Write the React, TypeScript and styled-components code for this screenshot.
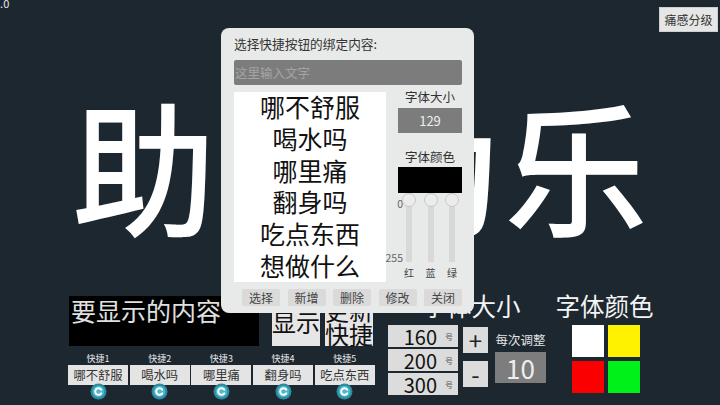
import React from 'react';
import styled, { createGlobalStyle } from 'styled-components';

const shortcuts = ['哪不舒服', '喝水吗', '哪里痛', '翻身吗', '吃点东西'];
const phrases = ['哪不舒服', '喝水吗', '哪里痛', '翻身吗', '吃点东西', '想做什么'];
const dialogActions = ['选择', '新增', '删除', '修改', '关闭'];
const sizes = ['160', '200', '300'];
const sliders = ['红', '蓝', '绿'];
const swatches = ['#ffffff', '#fff200', '#fb0000', '#00f01a'];

const RefreshIcon = () => (
    <StIcon width="17" height="17" viewBox="0 0 17 17">
        <circle cx="8.5" cy="8.5" r="8" fill="#2b8ea3" />
        <circle cx="8.5" cy="8.5" r="5.8" fill="#4fb7cc" />
        <path d="M11.2 6.6A3.3 3.3 0 1 0 11.2 10.4" fill="none" stroke="#ffffff" strokeWidth="2" strokeLinecap="round" />
    </StIcon>
);

const App = () => {
    return (
        <StPage>
            <GlobalStyle />
            <StTopBar>
                <StVersion>1.0</StVersion>
                <StGradeBtn>痛感分级</StGradeBtn>
            </StTopBar>
            <StHero>助人为乐</StHero>
            <StBottom>
                <StContentCol>
                    <StInputRow>
                        <StContentInput>要显示的内容</StContentInput>
                        <StShowBtn>显示</StShowBtn>
                        <StUpdateBtn>更新<br />快捷</StUpdateBtn>
                    </StInputRow>
                    <StShortcuts>
                        {shortcuts.map((text, i) => (
                            <StShortcut key={text}>
                                <StShortcutLabel>快捷{i + 1}</StShortcutLabel>
                                <StShortcutBtn>{text}</StShortcutBtn>
                                <RefreshIcon />
                            </StShortcut>
                        ))}
                    </StShortcuts>
                </StContentCol>
                <StSizeCol>
                    <StSectionTitle>字体大小</StSectionTitle>
                    <StSizeBody>
                        <StSizeList>
                            {sizes.map((size) => (
                                <StSizeBtn key={size}>
                                    {size}
                                    <StUnit>号</StUnit>
                                </StSizeBtn>
                            ))}
                        </StSizeList>
                        <StStepList>
                            <StStepBtn>+</StStepBtn>
                            <StStepBtn>-</StStepBtn>
                        </StStepList>
                        <StStepCol>
                            <StStepLabel>每次调整</StStepLabel>
                            <StStepValue>10</StStepValue>
                        </StStepCol>
                    </StSizeBody>
                </StSizeCol>
                <StColorCol>
                    <StSectionTitle>字体颜色</StSectionTitle>
                    <StSwatches>
                        {swatches.map((color) => (
                            <StSwatch key={color} $color={color} />
                        ))}
                    </StSwatches>
                </StColorCol>
            </StBottom>
            <StDialog>
                <StDialogTitle>选择快捷按钮的绑定内容:</StDialogTitle>
                <StDialogInput>这里输入文字</StDialogInput>
                <StDialogBody>
                    <StPhraseList>
                        {phrases.map((text) => (
                            <StPhrase key={text}>{text}</StPhrase>
                        ))}
                    </StPhraseList>
                    <StDialogSide>
                        <StSideLabel>字体大小</StSideLabel>
                        <StSizeValue>129</StSizeValue>
                        <StColorLabel>字体颜色</StColorLabel>
                        <StColorPreview />
                        <StSliderArea>
                            <StScale>
                                <span>0</span>
                                <span>255</span>
                            </StScale>
                            {sliders.map((name) => (
                                <StSlider key={name}>
                                    <StTrack>
                                        <StThumb />
                                    </StTrack>
                                    <StSliderName>{name}</StSliderName>
                                </StSlider>
                            ))}
                        </StSliderArea>
                    </StDialogSide>
                </StDialogBody>
                <StDialogActions>
                    {dialogActions.map((text) => (
                        <StActionBtn key={text}>{text}</StActionBtn>
                    ))}
                </StDialogActions>
            </StDialog>
        </StPage>
    );
};

export default App;

const GlobalStyle = createGlobalStyle`
    html, body {
        margin: 0;
        padding: 0;
        background: #1c2730;
    }
    * {
        box-sizing: border-box;
    }
`;
const StPage = styled.div`
    position: relative;
    display: flex;
    flex-direction: column;
    width: 720px;
    height: 405px;
    overflow: hidden;
    background: #1c2730;
    font-family: 'Noto Sans CJK SC', 'Noto Sans', sans-serif;
    color: #fff;
`;
const StTopBar = styled.div`
    display: flex;
    justify-content: space-between;
    align-items: flex-start;
    height: 32px;
    padding: 7px 2px 0 0;
`;
const StVersion = styled.span`
    margin: -11px 0 0 -6px;
    font-size: 11px;
    line-height: 14px;
    color: #e6e6e6;
`;
const StGradeBtn = styled.div`
    width: 59px;
    height: 25px;
    border: 1px solid #cfcfcf;
    background: #e6e6e6;
    color: #333;
    font-size: 12px;
    line-height: 23px;
    text-align: center;
    white-space: nowrap;
`;
const StHero = styled.div`
    height: 264px;
    font-size: 144px;
    font-weight: 500;
    line-height: 262px;
    text-align: center;
    white-space: nowrap;
    color: #fff;
`;
const StBottom = styled.div`
    display: flex;
    padding-left: 68px;
    height: 109px;
`;
const StContentCol = styled.div`
    width: 320px;
`;
const StInputRow = styled.div`
    display: flex;
    height: 50px;
    padding-left: 1px;
`;
const StContentInput = styled.div`
    width: 190px;
    height: 50px;
    padding-left: 2px;
    background: #000;
    color: #e0e0e0;
    font-size: 25px;
    line-height: 28px;
    white-space: nowrap;
`;
const StShowBtn = styled.div`
    width: 48px;
    height: 50px;
    margin-left: 13px;
    padding-top: 11px;
    background: #e6e6e6;
    color: #111;
    font-size: 24px;
    line-height: 30px;
    text-align: center;
`;
const StUpdateBtn = styled.div`
    width: 48px;
    height: 50px;
    margin-left: 5px;
    padding-top: 2px;
    background: #e6e6e6;
    color: #111;
    font-size: 24px;
    line-height: 24px;
    text-align: center;
    white-space: nowrap;
`;
const StShortcuts = styled.div`
    display: flex;
    gap: 1.7px;
    margin-top: 6px;
`;
const StShortcut = styled.div`
    display: flex;
    flex-direction: column;
    align-items: center;
    width: 60px;
`;
const StShortcutLabel = styled.div`
    height: 13px;
    font-size: 9px;
    line-height: 13px;
    color: #e8e8e8;
`;
const StShortcutBtn = styled.div`
    width: 100%;
    height: 20px;
    background: #e4e4e4;
    color: #333;
    font-size: 12.3px;
    line-height: 20px;
    text-align: center;
    white-space: nowrap;
`;
const StIcon = styled.svg`
    margin-top: -2px;
`;
const StSizeCol = styled.div`
    width: 167px;
`;
const StSectionTitle = styled.div`
    height: 31px;
    margin-top: -2px;
    color: #f4f4f4;
    font-size: 24.5px;
    line-height: 24px;
    text-align: center;
    white-space: nowrap;
`;
const StSizeBody = styled.div`
    display: flex;
    align-items: flex-start;
`;
const StSizeList = styled.div`
    display: flex;
    flex-direction: column;
    gap: 2px;
    width: 70px;
`;
const StSizeBtn = styled.div`
    display: flex;
    justify-content: flex-end;
    align-items: center;
    height: 22px;
    padding-right: 5px;
    background: #dcdcdc;
    color: #111;
    font-size: 20px;
`;
const StUnit = styled.span`
    margin-left: 8px;
    font-size: 8px;
    color: #555;
`;
const StStepList = styled.div`
    display: flex;
    flex-direction: column;
    gap: 8px;
    margin: 2px 0 0 5px;
`;
const StStepBtn = styled.div`
    width: 25px;
    height: 26px;
    background: #dcdcdc;
    color: #222;
    font-size: 24px;
    line-height: 26px;
    text-align: center;
`;
const StStepCol = styled.div`
    display: flex;
    flex-direction: column;
    align-items: center;
    margin-left: 7px;
`;
const StStepLabel = styled.div`
    height: 27px;
    padding-top: 8px;
    color: #e4e4e4;
    font-size: 12.5px;
    line-height: 14px;
    white-space: nowrap;
`;
const StStepValue = styled.div`
    width: 51px;
    height: 31px;
    background: #7d7d7d;
    color: #eee;
    font-size: 26px;
    line-height: 31px;
    text-align: center;
`;
const StColorCol = styled.div`
    width: 99px;
`;
const StSwatches = styled.div`
    display: grid;
    grid-template-columns: repeat(2, 32px);
    grid-auto-rows: 32px;
    gap: 4px;
    margin-left: 17px;
`;
const StSwatch = styled.div<{ $color: string }>`
    background: ${(props) => props.$color};
`;
const StDialog = styled.div`
    position: absolute;
    left: 221px;
    top: 28px;
    width: 253px;
    height: 285px;
    padding: 8px 12px 0 13px;
    border-radius: 8px;
    background: #e8e9e9;
    color: #222;
`;
const StDialogTitle = styled.div`
    height: 24px;
    color: #333;
    font-size: 12.7px;
    line-height: 16px;
    white-space: nowrap;
`;
const StDialogInput = styled.div`
    height: 25px;
    padding-left: 1px;
    border-radius: 2px;
    background: #7c7c7c;
    color: #a4a4a4;
    font-size: 12.5px;
    line-height: 25px;
`;
const StDialogBody = styled.div`
    display: flex;
    margin-top: 7px;
`;
const StPhraseList = styled.div`
    width: 152px;
    height: 190px;
    overflow: hidden;
    background: #fff;
    color: #111;
    font-size: 25px;
    text-align: center;
    white-space: nowrap;
`;
const StPhrase = styled.div`
    height: 31.8px;
    line-height: 29px;
`;
const StDialogSide = styled.div`
    display: flex;
    flex-direction: column;
    width: 64px;
    margin-left: 12px;
`;
const StSideLabel = styled.div`
    height: 16px;
    color: #333;
    font-size: 12.5px;
    line-height: 10px;
    text-align: center;
    white-space: nowrap;
`;
const StSizeValue = styled.div`
    height: 25px;
    background: #7c7c7c;
    color: #eee;
    font-size: 13px;
    line-height: 25px;
    text-align: center;
`;
const StColorLabel = styled(StSideLabel)`
    height: 18px;
    margin-top: 16px;
    line-height: 16px;
`;
const StColorPreview = styled.div`
    height: 26px;
    background: #000;
`;
const StSliderArea = styled.div`
    position: relative;
    display: flex;
    gap: 7.5px;
    padding-left: 4px;
`;
const StScale = styled.div`
    position: absolute;
    left: -14px;
    top: 5px;
    display: flex;
    flex-direction: column;
    align-items: flex-end;
    justify-content: space-between;
    width: 19px;
    height: 66px;
    color: #666;
    font-size: 10.5px;
    line-height: 12px;
`;
const StSlider = styled.div`
    display: flex;
    flex-direction: column;
    align-items: center;
    width: 14px;
`;
const StTrack = styled.div`
    position: relative;
    width: 6px;
    height: 69px;
    background: #d8d8d8;
`;
const StThumb = styled.div`
    position: absolute;
    left: -4px;
    top: 0;
    width: 14px;
    height: 14px;
    border: 1px solid #c8c8c8;
    border-radius: 50%;
    background: #ececec;
`;
const StSliderName = styled.div`
    margin-top: 5px;
    color: #444;
    font-size: 10px;
    line-height: 12px;
`;
const StDialogActions = styled.div`
    display: flex;
    justify-content: space-between;
    margin: 7px 0 0 8px;
`;
const StActionBtn = styled.div`
    width: 38px;
    height: 17px;
    border-radius: 2px;
    background: #dadada;
    color: #444;
    font-size: 12px;
    line-height: 17px;
    text-align: center;
`;
